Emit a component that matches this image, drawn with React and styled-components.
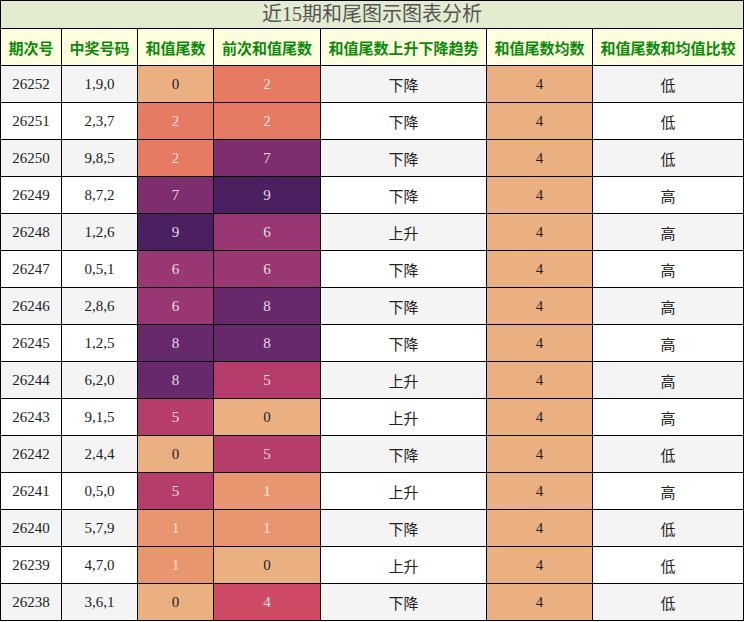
import React from "react";
import styled, { createGlobalStyle } from "styled-components";

const GlobalStyle = createGlobalStyle`
  html, body {
    margin: 0;
    padding: 0;
    background: #ffffff;
  }
  body {
    font-family: "Liberation Serif", "Noto Sans CJK SC", serif;
  }
`;

// heat colours for the tail digits (0-9)
const heat = {
  0: "#ebb082",
  1: "#e8966f",
  2: "#e67a63",
  3: "#dc5f63",
  4: "#cf4a65",
  5: "#b63c6b",
  6: "#983771",
  7: "#7e2d6e",
  8: "#67296b",
  9: "#4b2060",
};

const rows = [
  ["26252", "1,9,0", 0, 2, "下降", "低"],
  ["26251", "2,3,7", 2, 2, "下降", "低"],
  ["26250", "9,8,5", 2, 7, "下降", "低"],
  ["26249", "8,7,2", 7, 9, "下降", "高"],
  ["26248", "1,2,6", 9, 6, "上升", "高"],
  ["26247", "0,5,1", 6, 6, "下降", "高"],
  ["26246", "2,8,6", 6, 8, "下降", "高"],
  ["26245", "1,2,5", 8, 8, "下降", "高"],
  ["26244", "6,2,0", 8, 5, "上升", "高"],
  ["26243", "9,1,5", 5, 0, "上升", "高"],
  ["26242", "2,4,4", 0, 5, "下降", "低"],
  ["26241", "0,5,0", 5, 1, "上升", "高"],
  ["26240", "5,7,9", 1, 1, "下降", "低"],
  ["26239", "4,7,0", 1, 0, "上升", "低"],
  ["26238", "3,6,1", 0, 4, "下降", "低"],
];

const headers = [
  "期次号",
  "中奖号码",
  "和值尾数",
  "前次和值尾数",
  "和值尾数上升下降趋势",
  "和值尾数均数",
  "和值尾数和均值比较",
];

const widths = [61, 76, 76, 107, 166, 106, 151];

const Table = styled.table`
  width: 744px;
  border-collapse: collapse;
  table-layout: fixed;
  font-size: 15px;
  color: #222;
`;

const TitleCell = styled.th`
  height: 27px;
  padding: 0;
  background: #e3ebd1;
  border: 1px solid #000;
  color: #555;
  font-size: 20px;
  font-weight: normal;
  text-align: center;
  line-height: 27px;
`;

const HeadCell = styled.th`
  height: 36px;
  padding: 0;
  background: #ffffe0;
  border: 1px solid #000;
  color: #0a8a0a;
  font-family: "Noto Sans CJK SC", sans-serif;
  font-weight: bold;
  font-size: 15px;
  text-align: center;
  white-space: nowrap;
`;

const Row = styled.tr`
  background: ${(p) => (p.$odd ? "#f4f4f4" : "#ffffff")};
`;

const Cell = styled.td`
  height: 36px;
  padding: 0;
  border: 1px solid #000;
  text-align: center;
  vertical-align: middle;
`;

const HeatCell = styled(Cell)`
  background: ${(p) => heat[p.$v]};
  color: ${(p) => (p.$v === 0 ? "#222" : "rgba(255, 255, 255, 0.85)")};
`;

const AvgCell = styled(Cell)`
  background: #ebb082;
`;

export default function App() {
  return (
    <>
      <GlobalStyle />
      <Table>
        <colgroup>
          {widths.map((w, i) => (
            <col key={i} style={{ width: w }} />
          ))}
        </colgroup>
        <thead>
          <tr>
            <TitleCell colSpan={7}>近15期和尾图示图表分析</TitleCell>
          </tr>
          <tr>
            {headers.map((h) => (
              <HeadCell key={h}>{h}</HeadCell>
            ))}
          </tr>
        </thead>
        <tbody>
          {rows.map((r, i) => (
            <Row key={r[0]} $odd={i % 2 === 0}>
              <Cell>{r[0]}</Cell>
              <Cell>{r[1]}</Cell>
              <HeatCell $v={r[2]}>{r[2]}</HeatCell>
              <HeatCell $v={r[3]}>{r[3]}</HeatCell>
              <Cell>{r[4]}</Cell>
              <AvgCell>4</AvgCell>
              <Cell>{r[5]}</Cell>
            </Row>
          ))}
        </tbody>
      </Table>
    </>
  );
}
